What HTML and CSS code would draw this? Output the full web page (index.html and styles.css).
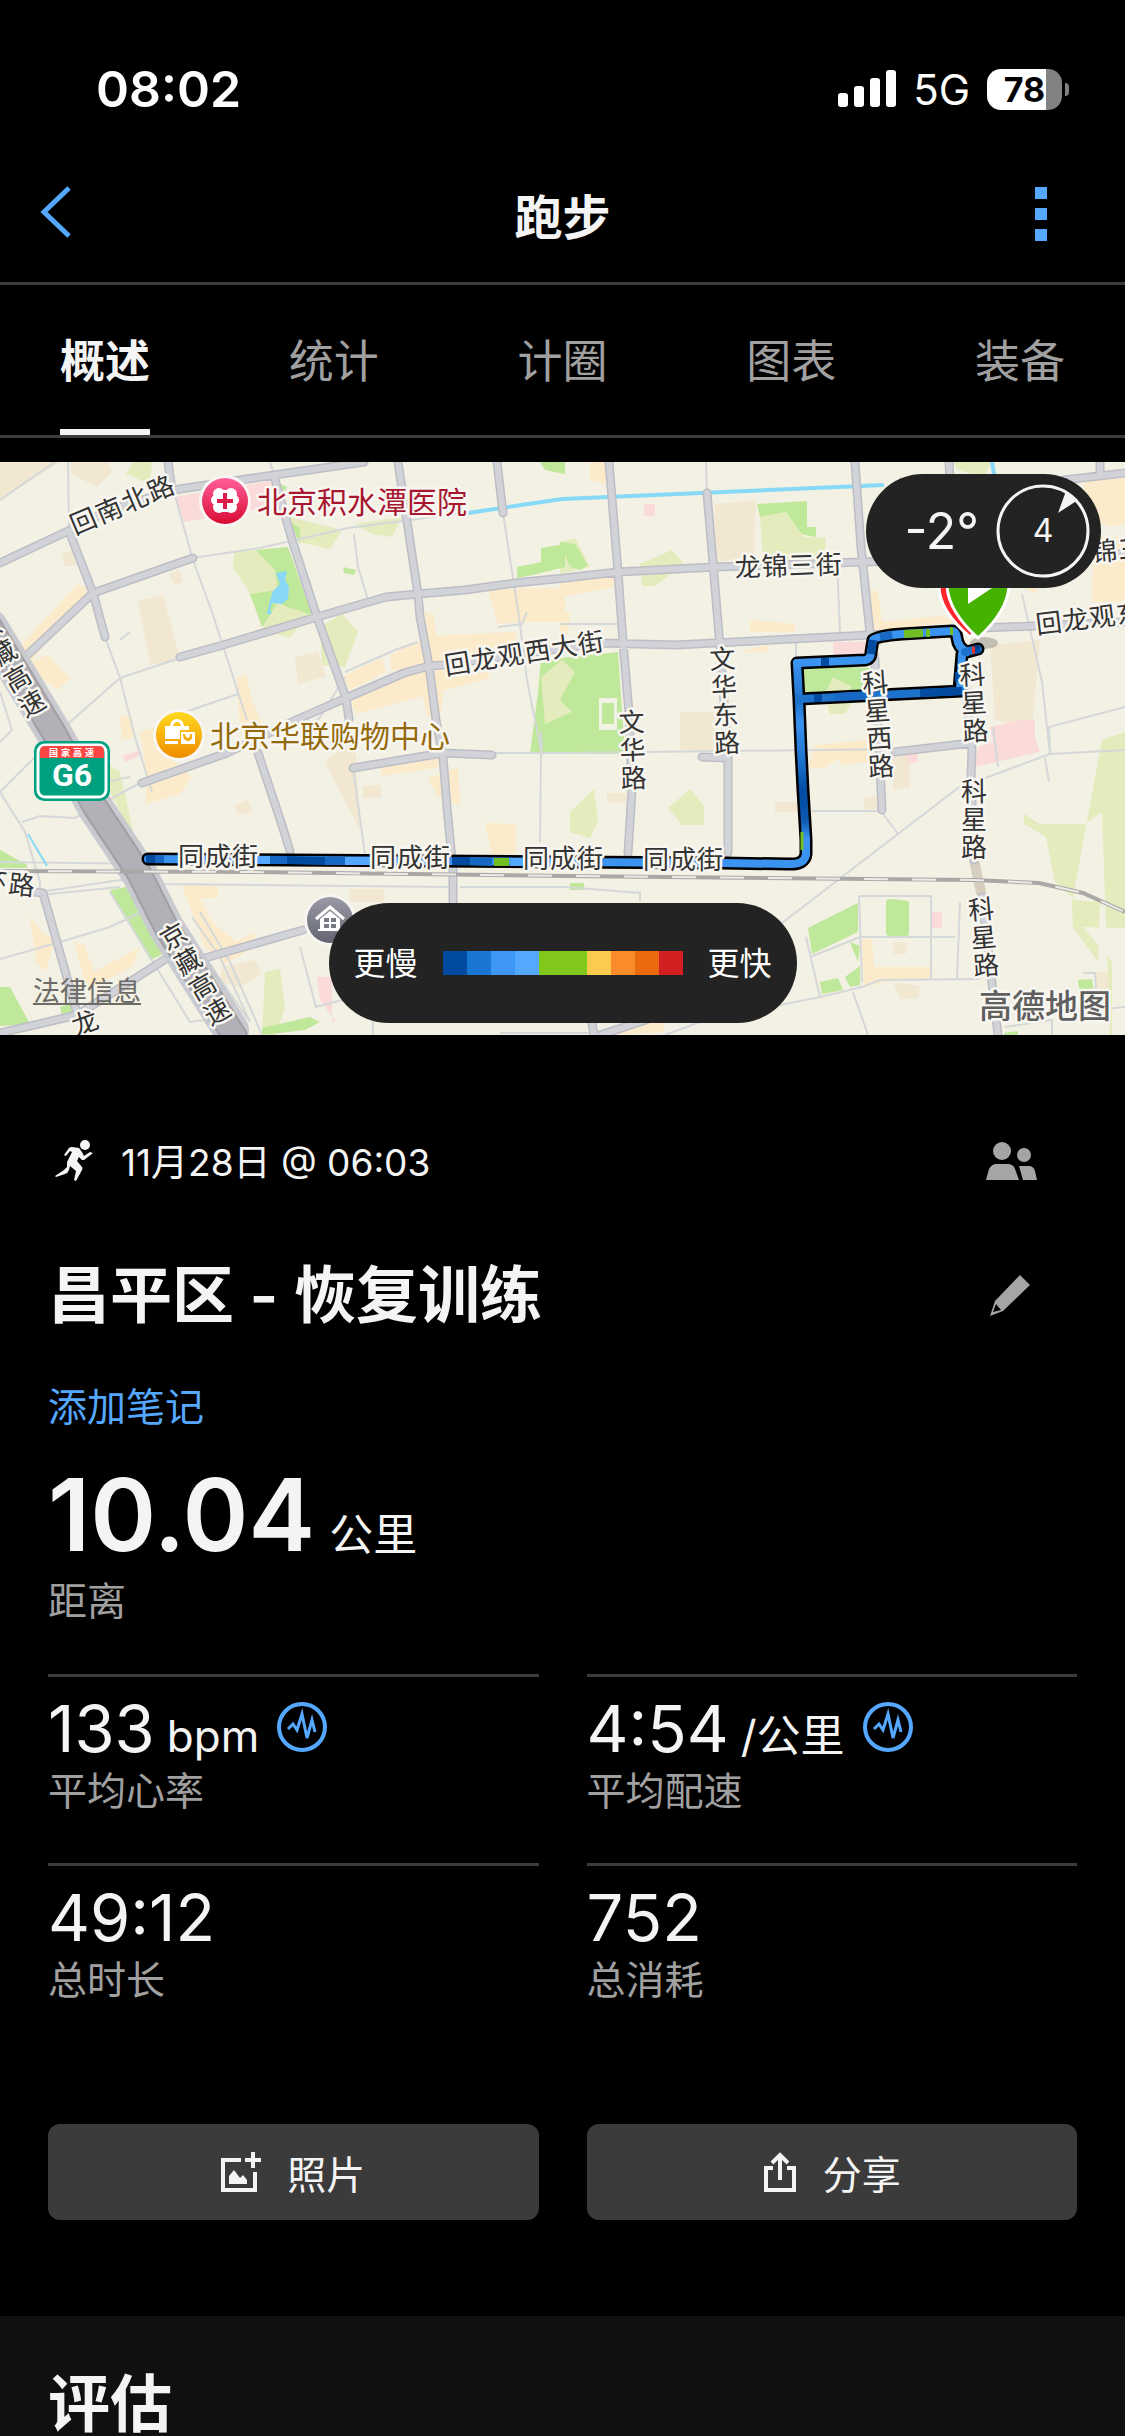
FILE: index.html
```html
<!DOCTYPE html>
<html lang="zh-CN">
<head>
<meta charset="utf-8">
<meta name="viewport" content="width=device-width, initial-scale=1">
<title>跑步</title>
<link rel="stylesheet" href="styles.css">
</head>
<body>
<div class="status">
  <span class="status-time">08:02</span>
  <div class="status-right">
    <svg class="signal" viewBox="0 0 58 38" aria-hidden="true"><rect y="23" width="10" height="14" rx="3"/><rect x="16" y="16" width="10" height="21" rx="3"/><rect x="32" y="8" width="10" height="29" rx="3"/><rect x="48" width="10" height="37" rx="3"/></svg>
    <span class="network">5G</span>
    <div class="battery"><span class="battery-body">78</span><span class="battery-tip"></span></div>
  </div>
</div>

<header class="header">
  <button class="icon-button" aria-label="返回"><svg width="32" height="56" viewBox="0 0 32 56" fill="none" stroke="#55a8ff" stroke-width="5"><path d="M29 2L4 26L29 50"/></svg></button>
  <h1 class="header-title">跑步</h1>
  <button class="icon-button icon-button-end" aria-label="更多"><svg width="12" height="54" viewBox="0 0 12 54" fill="#55a8ff"><path d="M0 0h12v12H0zM0 21h12v12H0zM0 42h12v12H0z"/></svg></button>
</header>

<nav class="tabs">
  <a class="tab tab-active" href="#overview">概述</a>
  <a class="tab" href="#stats">统计</a>
  <a class="tab" href="#laps">计圈</a>
  <a class="tab" href="#charts">图表</a>
  <a class="tab" href="#gear">装备</a>
</nav>

<main id="overview">
<section class="map">
  <svg class="map-canvas" viewBox="0 0 1125 573" role="img" aria-label="路线地图">
    <defs>
      <linearGradient id="pink" x2="0" y2="1"><stop stop-color="#ff5f9c"/><stop offset="1" stop-color="#d80c32"/></linearGradient>
      <linearGradient id="gold" x2="0" y2="1"><stop stop-color="#ffd91f"/><stop offset="1" stop-color="#f08c00"/></linearGradient>
      <linearGradient id="slate" x2="0" y2="1"><stop stop-color="#9b9ba8"/><stop offset="1" stop-color="#62646f"/></linearGradient>
      <linearGradient id="trackV" gradientUnits="userSpaceOnUse" x1="0" y1="200" x2="0" y2="400"><stop stop-color="#3b93f0"/><stop offset=".2" stop-color="#1d72cc"/><stop offset=".3" stop-color="#3b93f0"/><stop offset=".5" stop-color="#1d72cc"/><stop offset=".65" stop-color="#004a9f"/><stop offset=".8" stop-color="#0f5cb5"/><stop offset=".88" stop-color="#3b93f0"/></linearGradient>
      <path id="roads" d="M0 101L68 69L110 48L173 28L274 13L364 0M168 0L172 28M69 69L93 131L105 175M22 198L93 131L193 96M274 14L292 78L317 155L346 236L349 257M346 236L296 258L227 291L142 321M258 291L281 360L290 389M180 195L223 183L317 155L386 135L418 132L465 128L515 121L565 116L618 110L715 105L863 100L1125 92M398 0L418 132L420 155L429 203L436 258L443 295L447 345L453 408L453 445M346 236L404 211L429 204L443 203L600 181L675 183L870 173L956 167L1034 164L1125 160M497 0L503 51M609 0L618 110L623 180L629 251L632 328L628 391M707 31L713 101L720 185L728 295V391M702 295L728 296M855 0L861 85L870 171L875 198L882 348M949 0L952 60M963 198L972 288L971 315L974 398M982 435L998 573M1100 0V12M1064 18L1125 11M895 290L971 281M34 430L43 431L77 551M0 571L77 553L169 495M205 496L303 468M353 306L443 291L492 293M591 555L594 573M600 573L646 558"/>
    </defs>
    <rect width="1125" height="573" fill="#f3f0e4"/>

    <g fill="#f2e8d1">
      <path d="M0 0H60L0 38ZM70 0H108L112 10L96 25L72 12ZM138 139L163 133L180 197L150 203ZM62 92L75 88L76 104L64 104ZM169 112L179 108L183 120L174 123ZM295 195L318 190L326 214L298 222ZM325 300L355 276L360 368ZM363 324L381 323V335L363 336ZM234 343L248 338L252 350L238 353ZM714 42L756 38L754 94L716 100ZM990 183L1040 178L1032 265L995 258ZM680 250H716V288H680ZM350 427H384V440H350ZM222 505L255 498L262 512L240 525L220 520ZM607 331H627V341H607ZM775 340H798V350H775ZM864 335H880V347H864ZM893 288L910 286V325L893 328ZM893 480H906V492H893ZM893 520L920 524L918 536L900 537ZM1095 510H1115V545H1095Z"/>
    </g>
    <g fill="#fcebcb">
      <path d="M20 184L78 122L87 126L85 138L28 202ZM30 200L48 193L70 216L58 228L36 212ZM343 214L382 196L386 210L350 228ZM390 193L428 174L516 170V192L392 209ZM350 238L420 204L488 210L490 216L356 252ZM488 128L525 126L565 126V160H525L498 162ZM425 150L434 152L436 180L428 182ZM421 228L444 230L440 254H427ZM237 215L246 212L252 238L262 262L240 270ZM120 255L132 253L134 275L122 278ZM145 300L140 270L160 264L180 282L170 296L192 315L180 332L146 342ZM182 424H218V436H200L212 460L236 480L255 470V484L226 502L205 485ZM380 306L443 296L447 304L382 314ZM428 316L458 306L460 344L438 335ZM485 361L516 362V392L492 393ZM590 0H607L606 22L590 18ZM560 120L614 114V125L562 135ZM560 150H570L568 172H560ZM750 158L795 162V170H750ZM870 127L878 130L882 160L940 154L956 160L870 170ZM740 190L770 182L766 190ZM1083 20L1125 14V62L1110 65L1090 55ZM1094 75H1125V140L1092 140ZM1025 126L1038 124L1036 132ZM815 283L868 278V300L840 303V296L824 306H808ZM862 477L872 477L874 505L931 505V516L885 520L864 526ZM30 455L42 470L54 478L46 510L36 500ZM74 480L84 482L94 510L140 485L132 505L92 525L85 520ZM640 560L664 558V570L610 573Z"/>
    </g>
    <g fill="#fbdada">
      <path d="M175 35L270 19L273 44L184 60ZM833 180H868V200L834 197ZM644 42H655V54H644ZM990 265L1020 258H1035V275L1040 290L975 305L978 285L993 280ZM906 292L917 290L918 300L908 302ZM932 450H942V466H932ZM317 515H332V560L350 556L335 559L320 538ZM122 294L140 288L142 292L126 300Z"/>
    </g>
    <g fill="#e4ecbd">
      <path d="M133 0H152L150 22L126 12ZM234 90L288 85L312 153L300 162L290 176L265 168L247 126L233 106ZM320 165L342 152L358 170L345 205L322 203ZM290 55L342 68L330 87L298 80ZM355 62L402 55L392 75L372 72ZM560 80L575 76L590 105L560 112ZM640 102L672 88L684 102L655 124H642ZM953 0H992L984 15L958 8ZM105 300L120 310L135 378L110 330ZM570 350L594 327L598 360L590 376L570 370ZM668 346L690 327L704 344V363H682ZM1102 278L1125 270V573H1110L1102 350L1085 362H1040L1024 352V362L1046 375L1055 420L1075 438L1100 440L1098 500L1073 465L1072 440ZM265 510L280 507L285 545L276 573H262ZM825 235L838 215L852 240L845 252H830Z"/>
    </g>
    <path fill="#f3f0e4" d="M1083 465L1125 466V573H1112V500Z"/>
    <g fill="#bfe89a">
      <path d="M256 88L288 85L312 153L285 144L278 140L262 165L250 132L278 128L275 108ZM290 60L300 66V82ZM280 22L287 25L284 32ZM343 105L356 108L354 113L344 111ZM541 86L565 82V105L533 113L517 116V105L541 100ZM560 80L575 82L588 103L580 108L590 110L570 105ZM757 42L807 39V65H816V75L800 72L786 50L760 55ZM541 198L618 190L625 292H530L538 230ZM540 0H565V12L545 8ZM110 428L126 425L168 490L150 498ZM0 388L27 403V406H0ZM0 525H10L30 562L0 564ZM808 466L858 441V470L812 492ZM886 440Q886 437 890 437L909 439V472Q909 474 905 474H890Q886 474 886 470ZM803 203L872 206V230L805 236ZM820 520L838 516L843 528L822 532ZM845 515L860 504V523L850 525ZM850 480L860 484L858 500ZM1078 518L1092 517L1094 530L1080 532ZM60 545L72 541L76 550L62 554ZM262 566L310 555L320 560L305 568L262 573ZM570 421H584V428H570ZM1004 571L1018 569V573H1004Z"/>
    </g>
    <g fill="#e4ecbd"><path d="M760 55L786 50L804 75L826 76L824 97L763 98ZM541 215L562 198L575 210L560 238L572 250L545 262ZM833 215L852 225L838 236L825 232Z"/></g>
    <path fill="#f3f0e4" d="M599 236H617V268H599Z"/>
    <path fill="#bfe89a" d="M602 241H614V262H602Z"/>
    <path fill="#88d9f7" d="M276 111L287 109L285 118L289 125L288 137L282 142L272 141L270 148L272 152H267L270 139L273 129L280 122Z"/>

    <g fill="none" stroke="#d5d8d9" stroke-width="2">
      <path d="M68 0L69 69M0 38L55 0M174 30L193 98L212 150L225 190L247 258M193 96L260 86L348 66L503 46M274 12L270 0M105 175L120 216L135 275L152 330M120 216L180 196M120 216L70 260L0 330M0 230L12 268L0 280M120 178L130 170M185 250L238 232M345 210L395 188L418 180M345 215L318 258L250 270M354 72L358 105L368 138M503 51L519 155L527 218L541 288L540 380M527 150L522 162L498 165M493 291H565L900 287M353 306L366 400M706 0L707 31M541 270L542 293M0 330L25 370L40 420L40 430M80 325L130 315M40 430L120 418L160 422L450 425M40 433L120 425M22 360L40 354L75 356L142 320M0 497L60 480L110 465L142 450M110 430L190 560L220 556M200 450L230 500L262 573M300 485L316 545L372 530M192 455L220 495L250 560M460 425H565L640 431L640 440M880 348L898 372M812 349H885M782 461L958 326L1050 292L1125 288M859 434H931V516M859 434L862 520M806 475L820 535L862 525L880 518L980 517M810 495L860 475H955M960 440L957 516M853 530L868 573M770 545L820 535M840 170L837 100M1022 132L1042 220L1050 292L1049 265L1125 245M993 265L998 305M1045 296L1049 320M1083 511H1095L1098 560M373 555V573M500 571H600M665 573L700 560M1125 545L1050 552M1005 565L1052 558V573M0 400L150 402M148 402L165 403M100 335L130 420L165 470M160 430L250 560M560 162H618M796 172V200"/>
    </g>

    <path fill="none" stroke="#88d9f7" stroke-width="4" d="M468 51L562 37L884 23M992 0L995 18"/>
    <path fill="none" stroke="#88d9f7" stroke-width="2" d="M28 372L47 404"/>

    <path fill="none" stroke="#d6cfbf" stroke-width="10" d="M974 398L982 435"/>
    <g fill="none" stroke-linejoin="round" stroke-linecap="round">
      <use href="#roads" stroke="#bdbec5" stroke-width="9"/>
      <use href="#roads" stroke="#d2d3d9" stroke-width="6"/>
      <path stroke="#c9cacf" stroke-width="36" d="M-10 165L54 271L95 345L139 411L166 465L231 568"/>
      <path stroke="#9f9fa5" stroke-width="26" d="M-10 165L54 271L95 345L139 411L166 465L235 575"/>
      <path stroke="#b1b1b7" stroke-width="22" d="M-10 165L54 271L95 345L139 411L166 465L235 575"/>
    </g>
    <path fill="none" stroke="#a9a8a6" stroke-width="4" d="M0 409L252 410L565 414L974 418L1039 421L1083 431L1125 450"/>
    <path fill="none" stroke="#ecebe8" stroke-width="2" stroke-dasharray="24 24" d="M0 409L252 410L565 414L974 418L1039 421L1083 431L1125 450"/>

    <g fill="none" stroke-linejoin="round" stroke-linecap="round">
      <path stroke="#000" stroke-width="13" d="M148 397L565 400L722 401L788 402Q805 403 806 392L806 378L803 328L801 288L799 238L797 201L865 198Q871 197 871 190L873 178Q876 174 902 172L952 169Q956 169 957 176Q958 186 967 190L978 187M799 237L962 229M962 192L959 228"/>
      <path stroke="#3b93f0" stroke-width="8" d="M148 397L565 400L722 401L788 402Q805 403 806 392"/>
      <path stroke="url(#trackV)" stroke-width="8" d="M806 392V378L803 328L801 288L799 238L797 201"/>
      <path stroke="#3b93f0" stroke-width="8" d="M797 201L865 198Q871 197 871 190L873 178Q876 174 902 172L952 169Q956 169 957 176Q958 186 967 190M962 192L960 228"/>
      <path stroke="#1d72cc" stroke-width="8" d="M799 237L962 229M965 190L978 187"/>
    </g>
    <g fill="none" stroke-width="8">
      <path stroke="#004a9f" d="M146 397H155M287 398L325 399M452 399L470 399M871 192L873 178M920 231L962 229M821 200H829M818 232V240M959 210V220M974 188L980 187"/>
      <path stroke="#1668c2" d="M155 397L164 397M270 398L287 398M325 399L345 399M470 399L492 400M835 235L870 233M880 175L892 173"/>
      <path stroke="#55a8ff" d="M178 397H200M255 398L270 398M345 399L372 399M510 400H522M565 400L600 400"/>
      <path stroke="#72bd22" d="M494 400H509M904 172L923 171M926 171H930M950 169H953"/>
      <path stroke="#72bd22" stroke-width="3" d="M802 370V388"/>
      <path stroke="#e6342a" stroke-width="7" d="M972 188H975"/>
    </g>

    <ellipse cx="984" cy="181" rx="14" ry="6" fill="#000" opacity=".2"/>
    <g stroke="#fff" stroke-width="3">
      <path fill="#ff272b" d="M970 175C950 158 939 142 939 124A31 31 0 0 1 1001 124C1001 142 990 158 970 175Z"/>
      <path fill="#46b200" d="M978 176C958 158 948 142 947 124A31 31 0 0 1 1009 124C1008 142 998 158 978 176Z"/>
      <path stroke="none" fill="#fff" d="M968 96L998 122L968 142Z"/>
    </g>

    <g class="road-label">
      <text transform="translate(75 73) rotate(-23)" x="0 28 56 84">回南北路</text>
      <text transform="translate(446 213) rotate(-9)" x="0 27 54 81 108 135">回龙观西大街</text>
      <text transform="translate(735 115) rotate(-2)" x="0 27 54 81">龙锦三街</text>
      <text transform="translate(1037 172) rotate(-7)" x="0 27 54 81">回龙观东</text>
      <text transform="translate(1065 102) rotate(-5)" x="0 27 54">龙锦三</text>
      <text transform="translate(178 404)" x="0 27 54">同成街</text>
      <text transform="translate(370 405)" x="0 27 54">同成街</text>
      <text transform="translate(523 406)" x="0 27 54">同成街</text>
      <text transform="translate(643 407)" x="0 27 54">同成街</text>
      <text transform="translate(-20 428) rotate(6)" x="0 28">环路</text>
      <text transform="translate(619 270) rotate(-2)" x="0 0 0" y="0 28 56">文华路</text>
      <text transform="translate(710 207) rotate(-3)" x="0 0 0 0" y="0 28 56 84">文华东路</text>
      <text transform="translate(863 231) rotate(-4)" x="0 0 0 0" y="0 28 56 84">科星西路</text>
      <text transform="translate(960 223) rotate(-3)" x="0 0 0" y="0 28 56">科星路</text>
      <text transform="translate(961 339)" x="0 0 0" y="0 28 56">科星路</text>
      <text transform="translate(969 458) rotate(-5)" x="0 0 0" y="0 28 56">科星路</text>
      <text transform="translate(-18 181) rotate(-30)" x="0 0 0 0" y="0 29 58 87">京藏高速</text>
      <text transform="translate(167 489) rotate(-30)" x="0 0 0 0" y="0 29 58 87">京藏高速</text>
      <text transform="translate(76 574) rotate(-20)">龙</text>
    </g>

    <g>
      <circle cx="225" cy="39" r="26" fill="#f8f5f3"/><circle cx="225" cy="39" r="23" fill="url(#pink)"/>
      <g fill="#fff"><circle cx="219" cy="32" r="6"/><circle cx="231" cy="32" r="6"/><circle cx="219" cy="45" r="6"/><circle cx="231" cy="45" r="6"/><circle cx="216" cy="38" r="5"/><circle cx="234" cy="38" r="5"/><path d="M219 28H231V50H219Z"/></g>
      <path d="M223 31H227V37H233V41H227V47H223V41H217V37H223Z" fill="#df1b4a"/>
      <text class="place place-red" x="257" y="51">北京积水潭医院</text>
    </g>
    <g>
      <circle cx="179" cy="273" r="26" fill="#f8f5f3"/><circle cx="179" cy="273" r="23" fill="url(#gold)"/>
      <path fill="#fff" d="M165 264H170Q171 257 177 257T184 264H189V268H180V277H165ZM173 264H181Q180 260 177 260T173 264ZM165 279H178V282H165ZM181 270H195V282H181ZM183 272Q183 279 188 279T192 272H190Q190 276 188 276T185 272Z" fill-rule="evenodd"/>
      <text class="place place-gold" x="210" y="285">北京华联购物中心</text>
    </g>
    <g>
      <circle cx="330" cy="458" r="26" fill="#f8f5f3"/><circle cx="330" cy="458" r="23" fill="url(#slate)"/>
      <path d="M316 457L330 445L344 457" fill="none" stroke="#fff" stroke-width="3"/>
      <path fill="#fff" d="M320 457L330 449L340 457V467H342V469H318V467H320Z"/><path fill="#777984" d="M324 456H329V460H324ZM331 456H336V460H331ZM324 462H329V466H324ZM331 462H336V466H331Z"/>
    </g>
    <g>
      <rect x="34" y="279" width="76" height="60" rx="10" fill="#00a180"/>
      <rect x="38" y="283" width="68" height="52" rx="7" fill="#00a180" stroke="#fff" stroke-width="3"/>
      <path d="M40 296V289Q40 284 45 284H99Q104 284 104 289V296Z" fill="#fb4642"/>
      <text class="shield-top" x="49 61 73 85" y="294">国家高速</text>
      <text class="shield-number" x="72" y="324">G6</text>
    </g>
    <text class="map-brand" x="979" y="556">高德地图</text>
  </svg>

  <a class="map-legal" href="#legal">法律信息</a>

  <div class="weather">
    <span class="temperature">-2°</span>
    <svg class="wind" viewBox="0 0 96 96"><circle cx="48" cy="48" r="45" fill="none" stroke="#f4f4f4" stroke-width="3"/><path d="M71 8L83 17L63 30Z" fill="#f4f4f4"/><text class="wind-speed" x="48" y="59">4</text></svg>
  </div>

  <div class="legend">
    <span class="legend-text">更慢</span>
    <div class="legend-scale"><i class="pace-1"></i><i class="pace-2"></i><i class="pace-3"></i><i class="pace-4"></i><i class="pace-5"></i><i class="pace-5"></i><i class="pace-6"></i><i class="pace-7"></i><i class="pace-8"></i><i class="pace-9"></i></div>
    <span class="legend-text">更快</span>
  </div>
</section>

<section class="summary">
  <div class="meta">
    <svg width="40" height="42" viewBox="0 0 40 42" fill="#f4f4f4" aria-hidden="true"><circle cx="31" cy="5" r="5"/><path d="M10 15L15 8Q16 7 18 7L25 8L28 12L30 16L36 12L39 13L30 20H28L25 17L23 21L28 27Q29 28 28 30L22 41L20 40L22 31L16 26L15 30Q14 33 11 34L2 37L1 36L10 30L13 27V22L18 12L16 11L12 16Z"/></svg>
    <span class="date">11月28日 @ 06:03</span>
    <button class="meta-button" aria-label="隐私"><svg width="52" height="38" viewBox="0 0 52 38" fill="#a5a5a5"><circle cx="16" cy="9" r="9"/><circle cx="38" cy="13" r="7"/><path d="M0 38L3 27Q6 22 10 22H23Q28 23 29 27L33 38ZM33 24H44Q48 25 49 29L51 38H37Z"/></svg></button>
  </div>

  <div class="title-row">
    <h2 class="title">昌平区 - 恢复训练</h2>
    <button class="meta-button edit-button" aria-label="编辑"><svg width="42" height="42" viewBox="0 0 42 42"><path fill="#a5a5a5" fill-rule="evenodd" d="M31 0L41 10L14 36L1 41L6 26ZM7 29L4 37L12 35Z"/></svg></button>
  </div>

  <a class="note" href="#note">添加笔记</a>

  <div class="distance"><span class="distance-value">10.04</span><span class="unit">公里</span></div>
  <div class="label">距离</div>

  <div class="stats">
    <div class="stat">
      <div class="stat-line"><span class="value">133</span><span class="unit">bpm</span>
        <button class="chart-button" aria-label="心率图表"><svg width="50" height="50" viewBox="0 0 50 50" fill="none" stroke="#55a8ff"><circle cx="25" cy="25" r="23" stroke-width="4"/><path stroke-width="3" d="M11 27L16 22L20 28L25 12L30 36L35 18L38 30"/></svg></button></div>
      <div class="label">平均心率</div>
    </div>
    <div class="stat">
      <div class="stat-line"><span class="value">4:54</span><span class="unit">/公里</span>
        <button class="chart-button" aria-label="配速图表"><svg width="50" height="50" viewBox="0 0 50 50" fill="none" stroke="#55a8ff"><circle cx="25" cy="25" r="23" stroke-width="4"/><path stroke-width="3" d="M11 27L16 22L20 28L25 12L30 36L35 18L38 30"/></svg></button></div>
      <div class="label">平均配速</div>
    </div>
    <div class="stat">
      <div class="stat-line"><span class="value">49:12</span></div>
      <div class="label">总时长</div>
    </div>
    <div class="stat">
      <div class="stat-line"><span class="value">752</span></div>
      <div class="label">总消耗</div>
    </div>
  </div>

  <div class="actions">
    <button class="action"><svg width="40" height="40" viewBox="0 0 40 40" fill="none" stroke="#f4f4f4" stroke-width="4"><path d="M20 8H2V38H34V20M24 8H40M32 0V16"/><path fill="#f4f4f4" stroke="none" d="M8 24L13 18L19 26L22 23L26 28V32H8Z"/></svg>照片</button>
    <button class="action"><svg width="34" height="40" viewBox="0 0 34 40" fill="none" stroke="#f4f4f4" stroke-width="4"><path d="M10 16H3V38H31V16H24M17 28V4M9 11L17 3L25 11"/></svg>分享</button>
  </div>
</section>

<section class="evaluation"><h2 class="title">评估</h2></section>
</main>
</body>
</html>
```

FILE: styles.css
```css
* { box-sizing: border-box; }
body {
  margin: 0;
  background: #000;
  color: #f4f4f4;
  font-family: Inter, "Noto Sans CJK SC", sans-serif;
  overflow-x: hidden;
}
h1, h2 { margin: 0; font-weight: 600; }
button { border: 0; padding: 0; background: none; color: inherit; font: inherit; display: flex; align-items: center; }
a { text-decoration: none; }
svg { display: block; flex: none; }

.status {
  display: flex;
  align-items: center;
  justify-content: space-between;
  height: 144px;
  padding: 34px 56px 0 96px;
  color: #fff;
}
.status-time { font-size: 50px; font-weight: 600; }
.status-right { display: flex; align-items: center; gap: 17px; }
.signal { width: 58px; height: 38px; fill: #fff; }
.network { font-size: 42px; }
.battery { display: flex; align-items: center; gap: 3px; }
.battery-body {
  display: flex;
  align-items: center;
  justify-content: center;
  width: 75px;
  height: 41px;
  border-radius: 14px;
  background: linear-gradient(90deg, #fff 59px, #828282 59px);
  color: #000;
  font-size: 34px;
  font-weight: 700;
}
.battery-tip { width: 4px; height: 13px; border-radius: 0 4px 4px 0; background: #828282; }

.header {
  display: grid;
  grid-template-columns: 1fr auto 1fr;
  align-items: center;
  height: 141px;
  padding: 2px 78px 0 40px;
  border-bottom: 3px solid #3c3c3c;
}
.header-title { font-size: 48px; padding-left: 38px; }
.icon-button-end { justify-self: end; }

.tabs {
  display: flex;
  justify-content: space-between;
  height: 153px;
  padding: 0 60px;
  border-bottom: 3px solid #3c3c3c;
}
.tab { display: flex; align-items: center; font-size: 45px; color: #a0a0a0; border-bottom: 6px solid transparent; padding-top: 2px; }
.tab-active { color: #f4f4f4; font-weight: 600; border-color: #f4f4f4; }

.map { position: relative; margin-top: 24px; overflow: hidden; }
.map-canvas { width: 100%; height: auto; font-family: "Noto Sans CJK SC", sans-serif; }
.road-label text, .place, .map-brand { paint-order: stroke; stroke: #f8f6f0; stroke-width: 5px; stroke-linejoin: round; }
.road-label { font-size: 26px; font-weight: 400; fill: #333; }
.place { font-size: 30px; font-weight: 400; }
.place-red { fill: #a71730; }
.place-gold { fill: #94690b; }
.shield-top { font-size: 9px; font-weight: 700; fill: #fff; }
.shield-number { font: 700 32px Roboto, sans-serif; fill: #fff; text-anchor: middle; }
.map-brand { font-size: 33px; font-weight: 500; fill: #5f5f5f; }
.map-legal { position: absolute; left: 33px; bottom: 24px; font-size: 27px; line-height: 38px; color: #6d6b67; text-decoration: underline; }

.weather {
  position: absolute;
  top: 12px;
  right: 24px;
  display: flex;
  align-items: center;
  justify-content: flex-end;
  gap: 16px;
  width: 235px;
  height: 114px;
  padding-right: 10px;
  border-radius: 57px;
  background: #232323;
}
.temperature { font-size: 50px; }
.wind { width: 96px; height: 96px; }
.wind-speed { font: 32px Inter, sans-serif; fill: #f4f4f4; text-anchor: middle; }

.legend {
  position: absolute;
  left: 0;
  right: 0;
  bottom: 12px;
  display: flex;
  align-items: center;
  justify-content: center;
  gap: 25px;
  width: 468px;
  height: 120px;
  margin: 0 auto;
  border-radius: 60px;
  background: #232323;
  color: #fff;
  font-size: 32px;
}
.legend-text { padding-bottom: 4px; }
.legend-scale { display: flex; }
.legend-scale i { width: 24px; height: 24px; }
.pace-1 { background: #004a9f; }
.pace-2 { background: #1976d2; }
.pace-3 { background: #3f97f5; }
.pace-4 { background: #55a8ff; }
.pace-5 { background: #80c91c; }
.pace-6 { background: #fccb4e; }
.pace-7 { background: #fa8b2a; }
.pace-8 { background: #eb6a10; }
.pace-9 { background: #d22022; }

.summary { padding: 96px 48px; }
.meta { display: flex; align-items: center; gap: 27px; height: 60px; padding: 0 39px 0 6px; }
.date { font-size: 37px; padding-bottom: 2px; }
.meta-button { margin-left: auto; }
.title-row { display: flex; align-items: center; height: 90px; margin-top: 60px; padding-right: 46px; }
.title { font-size: 62px; line-height: 90px; }
.note { display: block; margin-top: 38px; font-size: 39px; line-height: 56px; color: #55a8ff; }
.distance { display: flex; align-items: baseline; gap: 14px; height: 116px; margin-top: 22px; line-height: 116px; }
.distance-value { font-size: 100px; font-weight: 600; }
.unit { font-size: 44px; }
.label { font-size: 39px; line-height: 56px; color: #a0a0a0; }

.stats { display: grid; grid-template-columns: 1fr 1fr; gap: 0 48px; margin-top: 45px; }
.stat { height: 189px; padding-top: 13px; border-top: 3px solid #3c3c3c; }
.stat-line { display: flex; align-items: baseline; gap: 12px; height: 73px; line-height: 78px; }
.value { font-size: 65px; }
.chart-button { align-self: center; margin-left: 6px; }

.actions { display: grid; grid-template-columns: 1fr 1fr; gap: 48px; margin-top: 72px; }
.action { justify-content: center; gap: 26px; height: 96px; border-radius: 12px; background: #3b3b3b; font-size: 39px; }

.evaluation { height: 120px; padding: 44px 48px 0; background: #101010; overflow: hidden; }
```
